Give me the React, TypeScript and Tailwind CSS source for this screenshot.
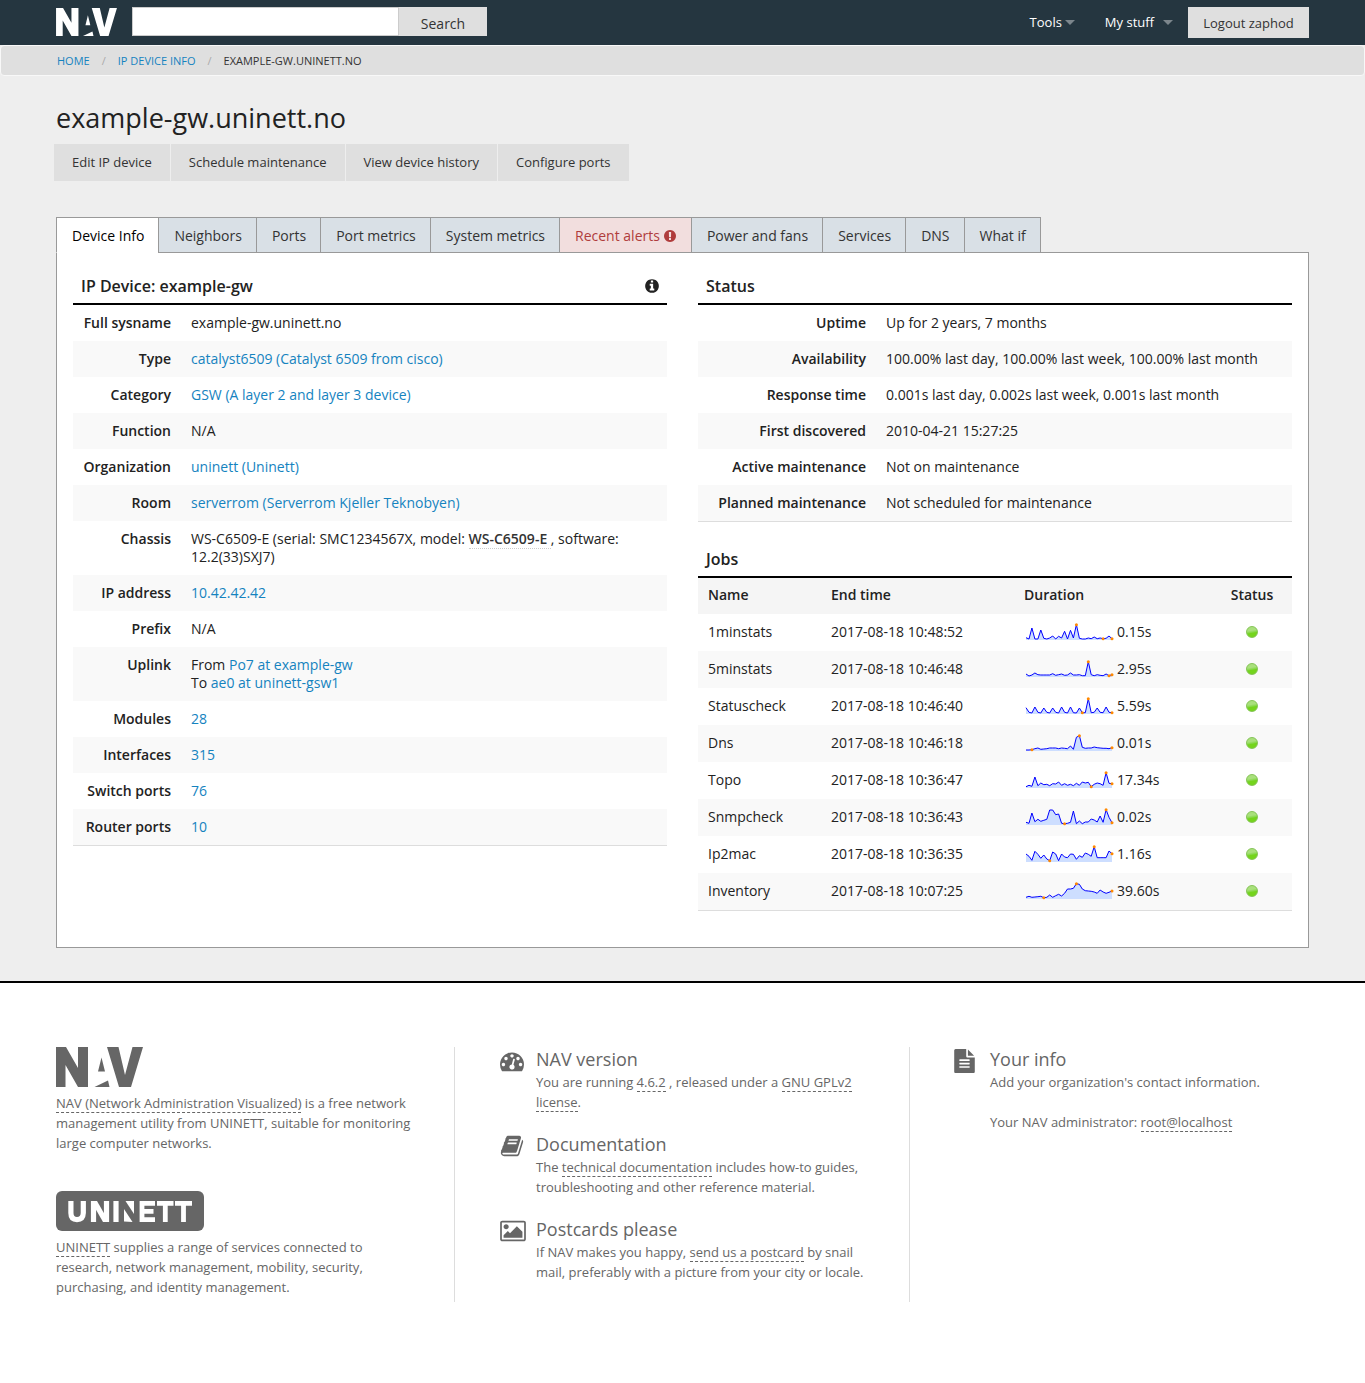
import type { ReactNode } from 'react';

const FA = {
  alert:
    'M896 128q209 0 385.5 103t279.5 279.5 103 385.5-103 385.5-279.5 279.5-385.5 103-385.5-103-279.5-279.5-103-385.5 103-385.5 279.5-279.5 385.5-103zm128 1247v-190q0-14-9-23.5t-22-9.5h-192q-13 0-23 10t-10 23v190q0 13 10 23t23 10h192q13 0 22-9.5t9-23.5zm-2-344l18-621q0-12-10-18-10-8-24-8h-220q-14 0-24 8-10 6-10 18l17 621q0 10 10 17.5t24 7.5h185q14 0 23.5-7.5t10.5-17.5z',
  info:
    'M1152 1376v-160q0-14-9-23t-23-9h-96v-512q0-14-9-23t-23-9h-320q-14 0-23 9t-9 23v160q0 14 9 23t23 9h96v320h-96q-14 0-23 9t-9 23v160q0 14 9 23t23 9h448q14 0 23-9t9-23zm-128-896v-160q0-14-9-23t-23-9h-192q-14 0-23 9t-9 23v160q0 14 9 23t23 9h192q14 0 23-9t9-23zm640 416q0 209-103 385.5t-279.5 279.5-385.5 103-385.5-103-279.5-279.5-103-385.5 103-385.5 279.5-279.5 385.5-103 385.5 103 279.5 279.5 103 385.5z',
  gauge:
    'M384 1152q0-53-37.5-90.5t-90.5-37.5-90.5 37.5-37.5 90.5 37.5 90.5 90.5 37.5 90.5-37.5 37.5-90.5zm192-448q0-53-37.5-90.5t-90.5-37.5-90.5 37.5-37.5 90.5 37.5 90.5 90.5 37.5 90.5-37.5 37.5-90.5zm428 481l101-382q6-26-7.5-48.5t-38.5-29.5-48 6.5-30 39.5l-101 382q-60 5-107 43.5t-63 98.5q-20 77 20 146t117 89 146-20 89-117q16-60-6-117t-72-91zm660-33q0-53-37.5-90.5t-90.5-37.5-90.5 37.5-37.5 90.5 37.5 90.5 90.5 37.5 90.5-37.5 37.5-90.5zm-640-640q0-53-37.5-90.5t-90.5-37.5-90.5 37.5-37.5 90.5 37.5 90.5 90.5 37.5 90.5-37.5 37.5-90.5zm448 192q0-53-37.5-90.5t-90.5-37.5-90.5 37.5-37.5 90.5 37.5 90.5 90.5 37.5 90.5-37.5 37.5-90.5zm320 448q0 261-141 483-19 29-54 29h-1402q-35 0-54-29-141-221-141-483 0-182 71-348t191-286 286-191 348-71 348 71 286 191 191 286 71 348z',
  book:
    'M1703 478q40 57 18 129l-275 906q-19 64-76.5 107.5t-122.5 43.5h-923q-77 0-148.5-53.5t-99.5-131.5q-24-67-2-127 0-4 3-27t4-37q1-8-3-21.5t-3-19.5q2-11 8-21t16.5-23.5 16.5-23.5q23-38 45-91.5t30-91.5q3-10 .5-30t-.5-28q3-11 17-28t17-23q21-36 42-92t25-90q1-9-2.5-32t.5-28q4-13 22-30.5t22-22.5q19-26 42.5-84.5t27.5-96.5q1-8-3-25.5t-2-26.5q2-8 9-18t18-23 17-21q8-12 16.5-30.5t15-35 16-36 19.5-32 26.5-23.5 36-11.5 47.5 5.5l-1 3q38-9 51-9h761q74 0 114 56t18 130l-274 906q-36 119-71.5 153.5t-128.5 34.5h-869q-27 0-38 15-11 16-1 43 24 70 144 70h923q29 0 56-15.5t35-41.5l300-987q7-22 5-57 38 15 59 43zm-1064 2q-4 13 2 22.5t20 9.5h608q13 0 25.5-9.5t16.5-22.5l21-64q4-13-2-22.5t-20-9.5h-608q-13 0-25.5 9.5t-16.5 22.5zm-83 256q-4 13 2 22.5t20 9.5h608q13 0 25.5-9.5t16.5-22.5l21-64q4-13-2-22.5t-20-9.5h-608q-13 0-25.5 9.5t-16.5 22.5z',
  picture:
    'M576 576q0 80-56 136t-136 56-136-56-56-136 56-136 136-56 136 56 56 136zm1024 384v448h-1408v-192l320-320 160 160 512-512zm96-704h-1600q-13 0-22.5 9.5t-9.5 22.5v1216q0 13 9.5 22.5t22.5 9.5h1600q13 0 22.5-9.5t9.5-22.5v-1216q0-13-9.5-22.5t-22.5-9.5zm160 32v1216q0 66-47 113t-113 47h-1600q-66 0-113-47t-47-113v-1216q0-66 47-113t113-47h1600q66 0 113 47t47 113z',
  file:
    'M1596 476q14 14 28 36h-472v-472q22 14 36 28zm-476 164h544v1056q0 40-28 68t-68 28h-1344q-40 0-68-28t-28-68v-1600q0-40 28-68t68-28h800v544q0 40 28 68t68 28zm160 736v-64q0-14-9-23t-23-9h-704q-14 0-23 9t-9 23v64q0 14 9 23t23 9h704q14 0 23-9t9-23zm0-256v-64q0-14-9-23t-23-9h-704q-14 0-23 9t-9 23v64q0 14 9 23t23 9h704q14 0 23-9t9-23zm0-256v-64q0-14-9-23t-23-9h-704q-14 0-23 9t-9 23v64q0 14 9 23t23 9h704q14 0 23-9t9-23z',
};

function Icon({ d, className, viewBox = '0 0 1792 1792' }: { d: string; className: string; viewBox?: string }) {
  return (
    <svg viewBox={viewBox} className={className} fill="currentColor" aria-hidden="true">
      <path d={d} />
    </svg>
  );
}

function NavLogo({ className }: { className: string }) {
  return (
    <svg viewBox="0 0 87 40" className={className} fill="currentColor" role="img" aria-label="NAV">
      <path d="M0 0H10L22 21V0H32V40H22L9.500 18V40H0Z" />
      <path d="M45.500 10.500 42 24.500H49Z" />
      <path d="M38.500 40 52 33.500 53.500 40Z" />
      <path d="M51 0H62.500L69 28 76.500 0H87L75 40H63Z" />
    </svg>
  );
}

function UninettLogo() {
  return (
    <svg viewBox="0 0 148 40" className="block h-10 w-[148px]" role="img" aria-label="UNINETT">
      <rect width="148" height="40" rx="6" fill="#666" />
      <g fill="none" stroke="#fff" strokeWidth="5.200">
        <path d="M14.900 10V22Q14.900 28.600 21 28.600T27.300 22V10" />
        <path d="M37.500 31V10M50.500 31V10" />
        <path d="M60 10V31" />
        <path d="M86 10V31M84 12.400H99M86 20.400H97.500M84 28.600H99" strokeWidth="4.800" />
        <path d="M101 12.400H117.500M109.300 10V31M119 12.400H136M127.500 10V31" strokeWidth="4.800" />
      </g>
      <path d="M35 10H41L53 31H47Z" fill="#fff" />
      <path d="M69.500 10H78V23Z" fill="#fff" />
      <path d="M68 18 76.500 31 68 30.500Z" fill="#fff" />
    </svg>
  );
}

function Sparkline({ values, low }: { values: number[]; low: number }) {
  const x = (i: number) => 1 + (i * 86) / 29;
  const y = (v: number) => 16 - v / 3;
  const line = values.map((v, i) => `${x(i).toFixed(1)},${y(v).toFixed(1)}`).join(' ');
  const high = values.indexOf(Math.max(...values));
  const last = values.length - 1;
  return (
    <svg viewBox="0 0 89 18" className="h-[18px] w-[89px]" aria-hidden="true">
      <polygon points={`1,17 ${line} 87,17`} fill="#cddeff" />
      <polyline points={line} fill="none" stroke="#00f" strokeWidth="1" />
      {[low, high, last].map((i) => (
        <circle key={i} cx={x(i)} cy={y(values[i])} r="1.500" fill="#f80" />
      ))}
    </svg>
  );
}

function Link({ children }: { children: ReactNode }) {
  return (
    <a href="#" className="text-[#1583bf]">
      {children}
    </a>
  );
}

function FootLink({ children }: { children: ReactNode }) {
  return (
    <a href="#" className="border-b border-dashed border-[#666]">
      {children}
    </a>
  );
}

const deviceRows: [string, ReactNode][] = [
  ['Full sysname', 'example-gw.uninett.no'],
  ['Type', <Link>catalyst6509 (Catalyst 6509 from cisco)</Link>],
  ['Category', <Link>GSW (A layer 2 and layer 3 device)</Link>],
  ['Function', 'N/A'],
  ['Organization', <Link>uninett (Uninett)</Link>],
  ['Room', <Link>serverrom (Serverrom Kjeller Teknobyen)</Link>],
  [
    'Chassis',
    <>
      WS-C6509-E (serial: SMC1234567X, model:{' '}
      <span className="border-b border-dotted border-[#ccc] font-semibold text-[#333]">WS-C6509-E </span>, software: 12.2(33)SXJ7)
    </>,
  ],
  ['IP address', <Link>10.42.42.42</Link>],
  ['Prefix', 'N/A'],
  [
    'Uplink',
    <>
      From <Link>Po7 at example-gw</Link>
      <br />
      To <Link>ae0 at uninett-gsw1</Link>
    </>,
  ],
  ['Modules', <Link>28</Link>],
  ['Interfaces', <Link>315</Link>],
  ['Switch ports', <Link>76</Link>],
  ['Router ports', <Link>10</Link>],
];

const statusRows: [string, ReactNode][] = [
  ['Uptime', 'Up for 2 years, 7 months'],
  ['Availability', '100.00% last day, 100.00% last week, 100.00% last month'],
  ['Response time', '0.001s last day, 0.002s last week, 0.001s last month'],
  ['First discovered', '2010-04-21 15:27:25'],
  ['Active maintenance', 'Not on maintenance'],
  ['Planned maintenance', 'Not scheduled for maintenance'],
];

const jobs = [
  { name: '1minstats', end: '10:48:52', took: '0.15s', low: 26, values: [4, 0, 33, 0, 0, 27, 2, 0, 3, 9, 0, 8, 3, 23, 0, 26, 3, 43, 2, 0, 0, 3, 1, 6, 1, 3, 1, 2, 9, 1] },
  { name: '5minstats', end: '10:46:48', took: '2.95s', low: 28, values: [6, 0, 3, 9, 4, 3, 3, 3, 3, 7, 2, 4, 6, 2, 3, 9, 3, 3, 4, 1, 1, 43, 4, 1, 4, 2, 1, 6, 1, 4] },
  { name: 'Statuscheck', end: '10:46:40', took: '5.59s', low: 19, values: [16, 2, 0, 18, 2, 0, 15, 2, 0, 15, 2, 0, 18, 2, 0, 18, 1, 0, 15, 1, 1, 43, 1, 2, 15, 2, 1, 18, 2, 1] },
  { name: 'Dns', end: '10:46:18', took: '0.01s', low: 2, values: [0, 0, 1, 4, 6, 2, 3, 4, 6, 6, 6, 4, 6, 5, 4, 12, 2, 38, 43, 8, 5, 6, 6, 9, 7, 6, 5, 5, 4, 7] },
  { name: 'Topo', end: '10:36:47', took: '17.34s', low: 22, values: [1, 5, 2, 30, 4, 12, 7, 8, 4, 10, 9, 15, 5, 10, 5, 8, 4, 11, 5, 15, 12, 14, 1, 8, 12, 10, 5, 43, 11, 10] },
  { name: 'Snmpcheck', end: '10:36:43', took: '0.02s', low: 13, values: [5, 2, 33, 7, 14, 8, 11, 14, 42, 42, 28, 30, 2, 1, 2, 5, 39, 1, 9, 1, 6, 6, 15, 12, 6, 24, 5, 43, 20, 4] },
  { name: 'Ip2mac', end: '10:36:35', took: '1.16s', low: 8, values: [21, 14, 2, 29, 20, 8, 18, 6, 1, 27, 21, 1, 21, 12, 10, 21, 20, 5, 16, 11, 24, 20, 14, 43, 10, 10, 10, 10, 30, 22] },
  { name: 'Inventory', end: '10:07:25', took: '39.60s', low: 6, values: [2, 5, 2, 3, 4, 5, 1, 2, 9, 2, 7, 11, 6, 14, 27, 27, 29, 43, 41, 27, 22, 21, 20, 18, 14, 24, 18, 14, 17, 21] },
];

function PanelHeading({ children }: { children: ReactNode }) {
  return <h5 className="flex items-center justify-between border-b-2 border-black pt-1 pr-[7px] pb-[5px] pl-2 text-base/6 font-semibold">{children}</h5>;
}

function FactTable({ rows, labelWidth }: { rows: [string, ReactNode][]; labelWidth: string }) {
  return (
    <table className="w-full border-b border-[#ddd] text-sm/[18px]">
      <tbody>
        {rows.map(([label, value]) => (
          <tr key={label} className="even:bg-[#f9f9f9]">
            <th scope="row" className={`${labelWidth} px-2.5 py-[9px] text-right align-top font-semibold whitespace-nowrap`}>
              {label}
            </th>
            <td className="px-2.5 py-[9px]">{value}</td>
          </tr>
        ))}
      </tbody>
    </table>
  );
}

function Caret() {
  return <span className="border-x-[5px] border-t-[5px] border-x-transparent border-t-white/40" />;
}

const tabs = ['Device Info', 'Neighbors', 'Ports', 'Port metrics', 'System metrics', 'Recent alerts', 'Power and fans', 'Services', 'DNS', 'What if'];

function tabStyle(tab: string) {
  if (tab === 'Device Info') return 'border-b-white bg-white text-black';
  if (tab === 'Recent alerts') return 'border-b-[#999] bg-[#f2dede] text-[#b03c3c]';
  return 'border-b-[#999] bg-[#d9e0e6] text-[#333]';
}

function FootItem({ icon, title, children }: { icon: ReactNode; title: string; children: ReactNode }) {
  return (
    <section className="mb-5 flex">
      <div className="w-9 shrink-0 pt-0.5">{icon}</div>
      <div>
        <h5 className="text-lg/[25px]">{title}</h5>
        {children}
      </div>
    </section>
  );
}

export default function App() {
  return (
    <div className="min-h-screen bg-white font-['Open_Sans',sans-serif] text-[#222]">
      <header className="flex h-[45px] items-start bg-[#253640] px-14 pt-[7px]">
        <a href="#" className="mr-[15px] pt-px text-white">
          <NavLogo className="block h-7 w-[61px]" />
        </a>
        <form className="flex" onSubmit={(e) => e.preventDefault()}>
          <input type="search" aria-label="Search" className="h-[29px] w-[267px] border border-[#ccc] bg-white px-2 text-sm outline-none" />
          <button type="submit" className="h-[29px] w-[88px] bg-[#dfdfdf] pt-1 text-sm text-[#333]">
            Search
          </button>
        </form>
        <nav className="ml-auto flex text-[13px]/[31px] text-white">
          <button type="button" className="mr-[30px] flex items-center gap-[3px]">
            Tools <Caret />
          </button>
          <button type="button" className="mr-[15px] flex items-center gap-[9px]">
            My stuff <Caret />
          </button>
          <button type="button" className="h-[31px] w-[121px] bg-[#dfdfdf] pt-px text-[#333]">
            Logout zaphod
          </button>
        </nav>
      </header>

      <main className="bg-[#eee] pb-[33px]">
        <nav aria-label="Breadcrumb" className="rounded border border-[#f8f8f8] bg-[#dfdfdf] px-14 text-[11px]/[29px] uppercase">
          <ol className="flex">
            <li>
              <Link>Home</Link>
            </li>
            <li className="px-3 text-[#aaa]" aria-hidden="true">
              /
            </li>
            <li>
              <Link>IP Device Info</Link>
            </li>
            <li className="px-3 text-[#aaa]" aria-hidden="true">
              /
            </li>
            <li className="text-[#333]">example-gw.uninett.no</li>
          </ol>
        </nav>

        <div className="px-14">
          <h1 className="pt-6 pb-2 text-[27px]/9">example-gw.uninett.no</h1>
          <div className="-ml-0.5 flex gap-px">
            {['Edit IP device', 'Schedule maintenance', 'View device history', 'Configure ports'].map((label) => (
              <button key={label} type="button" className="h-[37px] bg-[#dfdfdf] px-[18px] text-[13px] text-[#333]">
                {label}
              </button>
            ))}
          </div>

          <ul className="mt-9 flex text-sm/[33px]">
            {tabs.map((tab) => (
              <li key={tab} className="-mr-px last:mr-0">
                <a href="#" className={`relative flex items-center gap-[3px] border border-[#999] pt-px pr-3.5 pl-[15px] ${tabStyle(tab)}`}>
                  {tab}
                  {tab === 'Recent alerts' && <Icon d={FA.alert} className="size-3.5" />}
                </a>
              </li>
            ))}
          </ul>
          <div className="-mt-px grid grid-cols-2 items-start gap-[31px] border border-[#999] bg-white px-4 pt-[17px] pb-9">
            <section>
              <PanelHeading>
                IP Device: example-gw
                <Icon d={FA.info} className="size-4" />
              </PanelHeading>
              <FactTable rows={deviceRows} labelWidth="w-[108px]" />
            </section>
            <div>
              <section>
                <PanelHeading>Status</PanelHeading>
                <FactTable rows={statusRows} labelWidth="w-[178px]" />
              </section>
              <section className="mt-[21px]">
                <PanelHeading>Jobs</PanelHeading>
                <table className="w-full table-fixed border-separate border-spacing-0 border-b border-[#ddd] text-left text-sm/[18px]">
                  <thead>
                    <tr className="bg-[#f5f5f5]">
                      <th className="w-[123px] px-2.5 pt-2 pb-2.5 font-semibold">Name</th>
                      <th className="w-[193px] px-2.5 pt-2 pb-2.5 font-semibold">End time</th>
                      <th className="px-2.5 pt-2 pb-2.5 font-semibold">Duration</th>
                      <th className="w-20 px-2.5 pt-2 pb-2.5 text-center font-semibold">Status</th>
                    </tr>
                  </thead>
                  <tbody>
                    {jobs.map((job) => (
                      <tr key={job.name} className="h-[37px] even:bg-[#f9f9f9]">
                        <td className="px-2.5 pb-px">{job.name}</td>
                        <td className="px-2.5 pb-px">2017-08-18 {job.end}</td>
                        <td className="px-2.5 pb-px">
                          <span className="flex items-center gap-[3px] pl-px">
                            <Sparkline values={job.values} low={job.low} />
                            {job.took}
                          </span>
                        </td>
                        <td className="px-2.5 pb-px">
                          <span
                            role="img"
                            aria-label="OK"
                            className="mx-auto block size-3 rounded-full border border-[#84c455] bg-linear-170 from-[#a9e07c] from-35% to-[#74d41c] to-60%"
                          />
                        </td>
                      </tr>
                    ))}
                  </tbody>
                </table>
              </section>
            </div>
          </div>
        </div>
      </main>

      <footer className="grid grid-cols-3 border-t-2 border-black pt-16 pb-20 text-[13px]/5 text-[#666]">
        <div className="border-r border-[#ddd] pr-10 pb-1 pl-14">
          <NavLogo className="block h-10 w-[87px]" />
          <p className="mt-1.5 mb-[38px]">
            <FootLink>NAV (Network Administration Visualized)</FootLink> is a free network management utility from UNINETT, suitable for
            monitoring large computer networks.
          </p>
          <UninettLogo />
          <p className="mt-1.5">
            <FootLink>UNINETT</FootLink> supplies a range of services connected to research, network management, mobility, security,
            purchasing, and identity management.
          </p>
        </div>
        <div className="border-r border-[#ddd] pr-11 pl-[45px]">
          <FootItem title="NAV version" icon={<Icon d={FA.gauge} className="size-6" />}>
            <p>
              You are running <FootLink>4.6.2</FootLink> , released under a <FootLink>GNU GPLv2 license</FootLink>.
            </p>
          </FootItem>
          <FootItem title="Documentation" icon={<Icon d={FA.book} className="size-6" />}>
            <p>
              The <FootLink>technical documentation</FootLink> includes how-to guides, troubleshooting and other reference material.
            </p>
          </FootItem>
          <FootItem title="Postcards please" icon={<Icon d={FA.picture} viewBox="-64 0 1920 1792" className="h-6 w-[26px]" />}>
            <p>
              If NAV makes you happy, <FootLink>send us a postcard</FootLink> by snail mail, preferably with a picture from your city or
              locale.
            </p>
          </FootItem>
        </div>
        <div className="pr-11 pl-11">
          <FootItem title="Your info" icon={<Icon d={FA.file} viewBox="128 0 1536 1792" className="h-6 w-[21px]" />}>
            <p>Add your organization's contact information.</p>
            <p className="mt-5">
              Your NAV administrator: <FootLink>root@localhost</FootLink>
            </p>
          </FootItem>
        </div>
      </footer>
    </div>
  );
}
